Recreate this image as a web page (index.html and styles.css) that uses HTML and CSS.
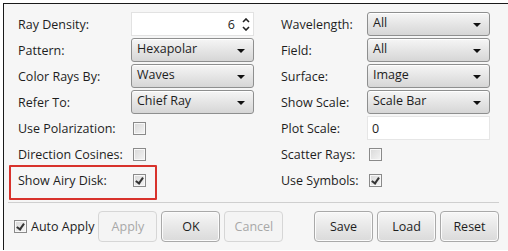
FILE: index.html
```html
<!DOCTYPE html>
<html>
<head>
    <title>Spot Diagram Settings</title>
    <link rel="stylesheet" href="styles.css">
</head>
<body>
    <div class="window">
        <div class="settings">
            <label class="field-label">Ray Density:</label>
            <div class="spinner">
                <span class="spinner-value">6</span>
                <span class="spinner-arrows">
                    <svg width="8" height="5" viewBox="0 0 8 5"><path d="M1 4 L4 1 L7 4" fill="none" stroke="#222" stroke-width="1.6"/></svg>
                    <svg width="8" height="5" viewBox="0 0 8 5"><path d="M1 1 L4 4 L7 1" fill="none" stroke="#222" stroke-width="1.6"/></svg>
                </span>
            </div>
            <label class="field-label">Wavelength:</label>
            <div class="select">All<span class="arrow"></span></div>

            <label class="field-label">Pattern:</label>
            <div class="select">Hexapolar<span class="arrow"></span></div>
            <label class="field-label">Field:</label>
            <div class="select">All<span class="arrow"></span></div>

            <label class="field-label">Color Rays By:</label>
            <div class="select">Waves<span class="arrow"></span></div>
            <label class="field-label">Surface:</label>
            <div class="select">Image<span class="arrow"></span></div>

            <label class="field-label">Refer To:</label>
            <div class="select">Chief Ray<span class="arrow"></span></div>
            <label class="field-label">Show Scale:</label>
            <div class="select">Scale Bar<span class="arrow"></span></div>

            <label class="field-label">Use Polarization:</label>
            <div class="check-cell"><span class="checkbox"></span></div>
            <label class="field-label">Plot Scale:</label>
            <div class="text-input">0</div>

            <label class="field-label">Direction Cosines:</label>
            <div class="check-cell"><span class="checkbox"></span></div>
            <label class="field-label">Scatter Rays:</label>
            <div class="check-cell"><span class="checkbox"></span></div>

            <label class="field-label">Show Airy Disk:</label>
            <div class="check-cell"><span class="checkbox checked"></span></div>
            <label class="field-label">Use Symbols:</label>
            <div class="check-cell"><span class="checkbox checked"></span></div>

            <div class="highlight"></div>
        </div>

        <div class="button-bar">
            <div class="auto-apply"><span class="checkbox checked"></span>Auto Apply</div>
            <button class="btn" disabled>Apply</button>
            <button class="btn">OK</button>
            <button class="btn" disabled>Cancel</button>
            <div class="spacer"></div>
            <button class="btn">Save</button>
            <button class="btn">Load</button>
            <button class="btn">Reset</button>
        </div>
    </div>
</body>
</html>
```

FILE: styles.css
```css
body {
    margin: 0;
    background: #fff;
    font-family: "Open Sans", "Noto Sans", sans-serif;
    font-size: 12.5px;
    color: #1e1e1e;
}
.window {
    margin: 3px 0 0 3px;
    height: 247px;
    box-sizing: border-box;
    border-top: 1px solid #1a1a1a;
    border-left: 1px solid #1a1a1a;
    background: #f6f6f6;
    overflow: hidden;
}
.settings {
    position: relative;
    display: grid;
    grid-template-columns: 113px 123px 113px 123px;
    grid-auto-rows: 24px;
    row-gap: 2px;
    padding: 8px 0 0 14px;
}
.settings .field-label:nth-child(4n+3) {
    padding-left: 27px;
}
.field-label {
    display: flex;
    align-items: center;
    white-space: nowrap;
}
.select {
    position: relative;
    display: flex;
    align-items: center;
    padding: 0 0 3px 5px;
    border: 1px solid #8e8f8f;
    border-radius: 3px;
    background: linear-gradient(#f6f6f6, #e4e4e4 55%, #d6d6d6);
    box-shadow: inset 0 1px 0 #fff;
}
.arrow {
    position: absolute;
    right: 8px;
    top: 10px;
    border-left: 4px solid transparent;
    border-right: 4px solid transparent;
    border-top: 4px solid #111;
}
.spinner {
    display: flex;
    align-items: center;
    justify-content: flex-end;
    background: #fff;
    border: 1px solid #e2e2e2;
    padding-right: 3px;
}
.spinner-value {
    margin-right: 7px;
}
.spinner-arrows {
    display: flex;
    flex-direction: column;
    gap: 3px;
}
.spinner-arrows svg {
    display: block;
}
.text-input {
    display: flex;
    align-items: center;
    background: #fff;
    border: 1px solid #e6e6e6;
    padding-left: 4px;
}
.check-cell {
    display: flex;
    align-items: center;
    padding-left: 2px;
}
.checkbox {
    display: inline-block;
    position: relative;
    width: 11px;
    height: 11px;
    border: 1px solid #8a8a8a;
    background: linear-gradient(135deg, #d8d8d8, #f4f4f4);
    box-shadow: inset 0 0 0 1px #f8f8f8;
}
.checkbox.checked::after {
    content: "";
    position: absolute;
    left: 3px;
    top: 1px;
    width: 3px;
    height: 6px;
    border-right: 2px solid #333;
    border-bottom: 2px solid #333;
    transform: rotate(35deg);
}
.highlight {
    position: absolute;
    left: 5px;
    top: 161px;
    width: 148px;
    height: 35px;
    box-sizing: border-box;
    border: 2px solid #d8322c;
    border-radius: 1px;
}
.button-bar {
    display: flex;
    align-items: center;
    gap: 4px;
    margin: 10px 9px 0 4px;
    padding-top: 8px;
    border-top: 1px solid #cfcfcf;
}
.auto-apply {
    display: flex;
    align-items: center;
    gap: 4px;
    font-size: 12.5px;
    padding-left: 6px;
}
.spacer {
    flex-grow: 1;
}
.btn {
    width: 59px;
    height: 31px;
    font-family: inherit;
    font-size: 12.5px;
    color: #1e1e1e;
    border: 1px solid #a9a9a9;
    border-radius: 4px;
    background: linear-gradient(#f7f7f7, #e8e8e8 50%, #dadada);
    box-shadow: inset 0 0 0 1px #fbfbfb;
}
.btn:disabled {
    color: #a8a8a8;
    border-color: #d6d6d6;
    background: #f4f4f4;
    box-shadow: none;
}
```
